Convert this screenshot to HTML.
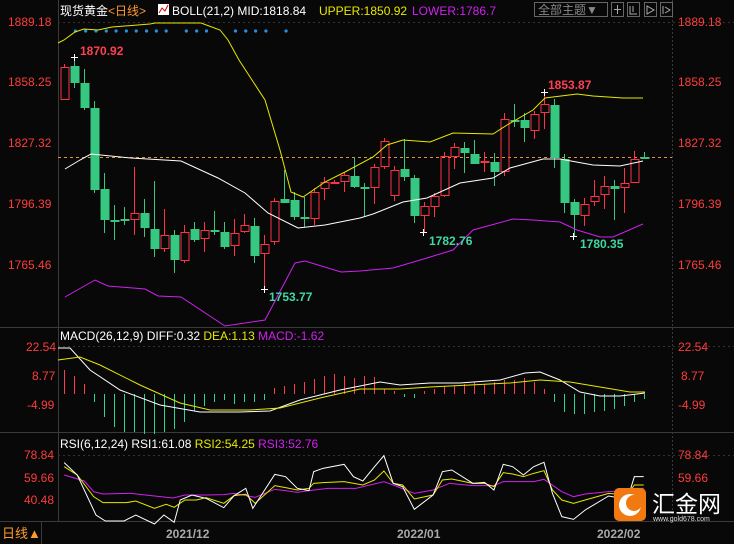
<!DOCTYPE html><html><head><meta charset="utf-8"><style>
html,body{margin:0;padding:0;background:#000;width:734px;height:544px;overflow:hidden}
svg{display:block}
text{font-family:"Liberation Sans","Noto Sans CJK SC",sans-serif}
</style></head><body>
<svg id="s" width="734" height="544" xmlns="http://www.w3.org/2000/svg">
<rect width="734" height="544" fill="#080808"/>
<g stroke="#3a3a3a" stroke-width="1">
<line x1="58.5" y1="0" x2="58.5" y2="521"/>
<line x1="672.5" y1="0" x2="672.5" y2="521" stroke-dasharray="2,2"/>
<line x1="0" y1="327.5" x2="734" y2="327.5"/>
<line x1="0" y1="432.5" x2="734" y2="432.5"/>
<line x1="0" y1="521.5" x2="734" y2="521.5"/>
<line x1="41.5" y1="521" x2="41.5" y2="544"/>
</g>
<g stroke="#333" stroke-dasharray="2,3">
<line x1="58" y1="22.5" x2="734" y2="22.5"/>
<line x1="58" y1="346.5" x2="734" y2="346.5"/>
<line x1="58" y1="455.5" x2="734" y2="455.5"/>
</g>
<g id="g"></g>
<g font-size="12" fill="#ff3c3c">
<text x="8" y="26">1889.18</text><text x="8" y="86">1858.25</text><text x="8" y="147">1827.32</text><text x="8" y="208">1796.39</text><text x="8" y="269">1765.46</text>
<text x="678" y="26">1889.18</text><text x="678" y="86">1858.25</text><text x="678" y="147">1827.32</text><text x="678" y="208">1796.39</text><text x="678" y="269">1765.46</text>
<text x="26" y="351">22.54</text><text x="32" y="380">8.77</text><text x="27" y="409">-4.99</text>
<text x="678" y="351">22.54</text><text x="681" y="380">8.77</text><text x="678" y="409">-4.99</text>
<text x="24" y="459">78.84</text><text x="24" y="482">59.66</text><text x="24" y="504">40.48</text>
<text x="678" y="459">78.84</text><text x="678" y="482">59.66</text>
</g>
<g font-size="12" font-weight="bold">
<text x="80" y="55" fill="#ff4050">1870.92</text>
<text x="548" y="89" fill="#ff4050">1853.87</text>
<text x="429" y="245" fill="#40d8a0">1782.76</text>
<text x="269" y="301" fill="#40d8a0">1753.77</text>
<text x="580" y="248" fill="#40d8a0">1780.35</text>
</g>
<g font-size="12">
<text x="60" y="15" fill="#fff">现货黄金<tspan fill="#ff9a30">&lt;日线&gt;</tspan></text>
<rect x="158" y="4" width="11" height="11" fill="#fff"/><path d="M159 13 L162 8 L165 11 L168 5" stroke="#d00" fill="none"/>
<text x="172" y="15" fill="#fff">BOLL(21,2) MID:1818.84</text>
<text x="319" y="15" fill="#e8e800">UPPER:1850.92</text>
<text x="412" y="15" fill="#d020f0">LOWER:1786.7</text>
<rect x="534.5" y="2.5" width="73" height="14" fill="none" stroke="#666"/>
<text x="538" y="14" fill="#888">全部主题▼</text>
<rect x="611.5" y="2.5" width="12" height="14" fill="none" stroke="#666"/>
<rect x="627.5" y="2.5" width="12" height="14" fill="none" stroke="#666"/>
<rect x="644.5" y="2.5" width="12" height="14" fill="none" stroke="#666"/>
<rect x="660.5" y="2.5" width="12" height="14" fill="none" stroke="#666"/>
<path d="M617.5 5v9M614 9.5h7M630 6v8h7M633 6v6M647 6v8l7-4z M663 6v8 M665 7l5 3-5 3" stroke="#aaa" fill="none"/>
<text x="60" y="340" fill="#fff">MACD(26,12,9) DIFF:0.32 <tspan fill="#e8e800">DEA:1.13</tspan> <tspan fill="#d020f0">MACD:-1.62</tspan></text>
<text x="60" y="448" fill="#fff">RSI(6,12,24) RSI1:61.08 <tspan fill="#e8e800">RSI2:54.25</tspan> <tspan fill="#d020f0">RSI3:52.76</tspan></text>
<text x="2" y="538" fill="#ff9a30" font-size="13">日线▲</text>
<text x="166" y="538" fill="#aaa" font-weight="bold">2021/12</text>
<text x="397" y="538" fill="#aaa" font-weight="bold">2022/01</text>
<text x="597" y="538" fill="#aaa" font-weight="bold">2022/02</text>
</g>
<rect x="614" y="488" width="32" height="33" rx="5" fill="#f07a10"/>
<circle cx="630" cy="505" r="11" fill="#fff"/><circle cx="634" cy="503" r="8" fill="#f07a10"/>
<text x="652" y="512" font-size="23" fill="#fff" font-family="Noto Sans CJK SC,sans-serif">汇金网</text>
<text x="653" y="521" font-size="7" fill="#ddd">www.gold678.com</text>
</svg>
<script>
var g=document.getElementById('g'),NS='http://www.w3.org/2000/svg';
function el(t,a){var e=document.createElementNS(NS,t);for(var k in a)e.setAttribute(k,a[k]);g.appendChild(e);return e;}
function line(pts,c){el('polyline',{points:pts.map(p=>p.join(',')).join(' '),fill:'none',stroke:c,'stroke-width':1});}
function z(arr){var r=[];for(var i=0;i<arr.length;i+=2)r.push([arr[i]/2.136,320+arr[i+1]/3]);return r;}
el('line',{x1:58,x2:672,y1:157.5,y2:157.5,stroke:'#e8902a','stroke-dasharray':'3,3'});
[161,183,205,227,248,270,291,313,334,355,398,420,441,503,525,546,568,611].forEach(x=>el('circle',{cx:x/2.136,cy:31,r:1.6,fill:'#2a8ee0'}));
var C=[[100,67,64,100],[66,83,58,88],[83,108,69,110],[108,190,101,193],[189,220,173,233],[220,221,205,240],[219,221,207,225],[220,213,167,235],[213,228,199,237],[229,249,181,257],[249,235,209,252],[235,260,230,273],[261,232,225,263],[229,240,222,242],[239,230,222,252],[230,232,211,235],[232,247,222,249],[246,233,219,256],[232,225,214,233],[226,256,218,263],[254,244,235,289],[242,201,198,245],[199,203,170,203],[200,217,192,220],[217,219,197,227],[219,192,188,225],[189,182,177,200],[183,182,180,184],[182,175,172,192],[176,187,157,188],[187,189,183,217],[188,167,164,204],[167,141,138,169],[196,170,166,201],[169,177,139,181],[178,216,175,223],[216,206,202,232],[207,196,193,217],[196,156,152,197],[157,147,143,169],[148,153,142,173],[154,164,140,164],[163,161,152,172],[162,172,153,186],[172,119,113,176],[120,122,104,127],[120,128,113,142],[131,114,111,139],[113,104,92,129],[105,158,99,168],[159,203,154,213],[202,215,199,236],[216,204,198,226],[202,196,180,206],[195,186,176,209],[186,189,180,220],[188,183,168,213],[183,159,151,183],[157,158,152,159]];
C.forEach((c,i)=>{var x=64+i*10,up=c[1]<c[0],col=up?'#ff3048':'#36c880';
var t=Math.min(c[0],c[1]),b=Math.max(c[0],c[1]);
if(up){el('line',{x1:x+.5,x2:x+.5,y1:c[2],y2:t,stroke:col});el('line',{x1:x+.5,x2:x+.5,y1:b,y2:c[3],stroke:col});
el('rect',{x:x-3,y:t+.5,width:8,height:Math.max(1,b-t-1),fill:'none',stroke:col});}
else{el('line',{x1:x+.5,x2:x+.5,y1:c[2],y2:c[3],stroke:col});el('rect',{x:x-3.5,y:t,width:9,height:Math.max(2,b-t),fill:col});}});
[[74,57],[264,289],[544,92],[423,232],[573,236]].forEach(p=>{el('path',{d:`M${p[0]-3} ${p[1]+.5}h7M${p[0]+.5} ${p[1]-3}v7`,stroke:'#fff'});});
line([[58,43],[64,40],[75,32],[84,29],[98,30],[112,27],[150,24],[155,23],[201,23],[220,30],[228,40],[239,60],[265,100],[280,150],[291,192],[303,197],[325,182],[345,172],[373,157],[387,145],[403,140],[430,142],[453,133],[493,134],[507,125],[533,110],[545,98],[577,94],[593,96],[623,98],[643,98]],'#e8e800');
line([[65,169],[80,160],[91,154],[131,158],[181,161],[218,178],[245,193],[268,213],[298,228],[325,225],[360,218],[373,214],[403,202],[427,198],[460,183],[493,178],[510,168],[543,159],[560,159],[593,165],[620,166],[643,161]],'#fff');
line([[65,297],[95,280],[108,286],[145,289],[158,296],[181,297],[225,326],[265,320],[295,263],[305,261],[341,272],[360,271],[393,268],[427,258],[453,250],[473,230],[513,219],[533,220],[560,222],[577,230],[600,237],[613,237],[643,224]],'#d020f0');
var H=[24,18,10,-8,-23,-33,-38,-38,-40,-40,-38,-35,-28,-17,-12,-8,-6,-10,-8,-8,-6,6,8,10,12,15,18,20,18,16,18,17,5,3,-3,-4,3,5,8,8,10,12,10,12,14,14,16,12,5,-8,-18,-20,-20,-18,-17,-15,-12,-8,-5];
H.forEach((h,i)=>{var x=64+i*10+.5;el('line',{x1:x,x2:x,y1:394,y2:394-h,stroke:h>0?'#ff3c4c':'#28d890'});});
line([[58,348],[70,348],[90,370],[120,390],[160,405],[200,412],[240,412],[270,411],[300,400],[340,390],[380,382],[400,385],[430,383],[460,383],[500,380],[525,373],[540,372],[560,380],[580,392],[600,396],[620,396],[645,393]],'#fff');
line([[58,360],[80,357],[100,365],[140,385],[180,403],[210,410],[250,410],[280,408],[320,398],[360,389],[400,389],[430,387],[470,385],[510,383],[540,380],[570,382],[600,387],[630,392],[645,392]],'#e8e800');
line(z([137,465,180,483,200,515,220,522,280,520,330,528,370,534,395,525,440,525,478,524,500,520,545,532,587,508,610,512,635,517,660,512,700,505,760,505,820,485,840,495,885,520,925,510,960,490,1010,497,1055,497,1075,485,1140,485,1162,478,1200,515,1225,530,1250,522,1300,515,1340,512,1355,505,1375,505]),'#d020f0');
line(z([137,440,165,465,200,530,220,548,270,548,290,543,330,565,355,553,372,562,395,540,420,540,440,533,478,550,500,527,525,523,545,550,587,497,610,503,635,510,660,505,670,490,690,488,735,485,775,495,800,480,820,453,840,490,860,495,885,537,925,525,945,480,965,477,1010,490,1035,490,1055,500,1075,458,1095,462,1118,470,1140,460,1162,452,1180,510,1200,540,1225,550,1250,540,1300,520,1340,525,1355,495,1375,495]),'#e8e800');
line(z([137,428,165,465,205,585,225,603,265,603,290,585,330,612,350,585,372,607,385,540,410,525,440,535,478,563,500,527,525,505,540,565,587,463,610,470,635,505,660,512,670,455,690,445,735,433,755,470,775,483,800,440,820,407,840,490,860,500,885,568,925,525,945,455,965,450,1010,490,1035,487,1055,510,1075,433,1095,440,1118,465,1140,440,1162,427,1180,520,1200,590,1225,598,1250,570,1300,528,1340,538,1355,470,1375,470]),'#fff');
</script>
</body></html>
